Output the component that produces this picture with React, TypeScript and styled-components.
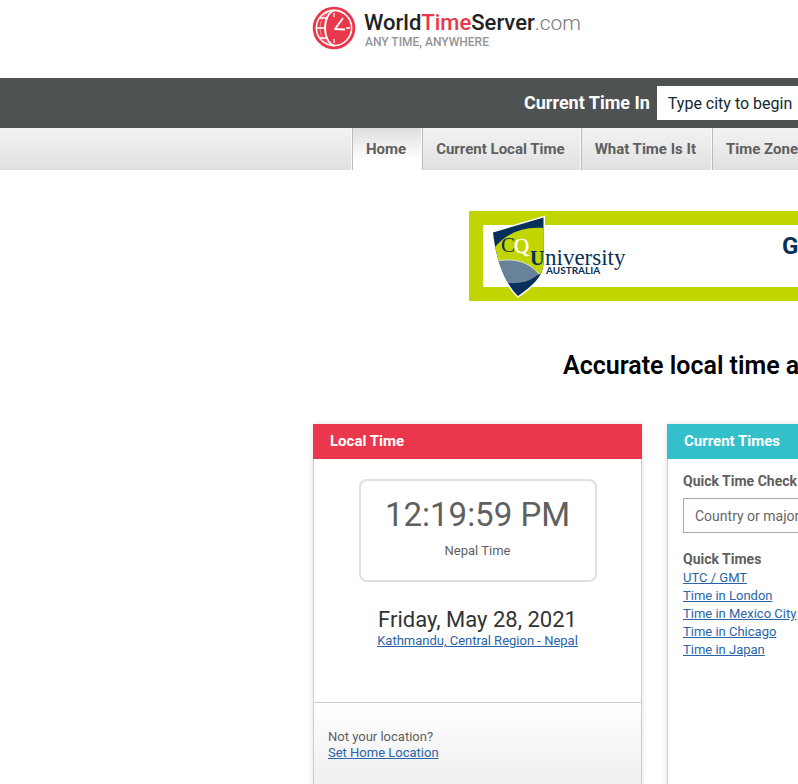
import React from "react";
import styled, { createGlobalStyle } from "styled-components";

const GlobalStyle = createGlobalStyle`
  * { box-sizing: border-box; }
  body {
    margin: 0;
    background: #fff;
    color: #5f5f5f;
    font-family: Roboto, "Liberation Sans", sans-serif;
    font-size: 13px;
    line-height: 18px;
  }
  h1, h2, h3, p, ul { margin: 0; padding: 0; }
  ul { list-style: none; }
`;

const Page = styled.div`
  min-height: 100vh;
  overflow: hidden;
  white-space: nowrap;
`;

const Header = styled.header`
  display: flex;
  align-items: flex-start;
  height: 78px;
  padding: 6px 0 0 312px;
`;

const BrandLink = styled.a`
  display: flex;
  gap: 8px;
  color: inherit;
  text-decoration: none;
`;

const BrandText = styled.div`
  padding-top: 4px;
`;

const BrandName = styled.div`
  color: #222;
  font-size: 22px;
  font-weight: 500;
  line-height: 26px;
`;

const BrandAccent = styled.span`
  color: #eb374b;
`;

const BrandSuffix = styled.span`
  color: #777;
  font-size: 21px;
  font-weight: 300;
`;

const Tagline = styled.div`
  padding-left: 1px;
  color: #949494;
  font-size: 12px;
  font-weight: 500;
  line-height: 13px;
`;

const SearchBar = styled.form`
  display: flex;
  align-items: center;
  gap: 7px;
  height: 50px;
  padding-left: 524px;
  background: #4e5253;
`;

const SearchLabel = styled.label`
  flex: none;
  color: #fff;
  font-size: 18px;
  font-weight: 700;
`;

const TextField = styled.input<{ $outlined?: boolean }>`
  flex: none;
  width: 288px;
  height: ${(p) => (p.$outlined ? 35 : 34)}px;
  padding: 0 11px;
  border: ${(p) => (p.$outlined ? "1px solid #aaa" : "0")};
  border-radius: 0;
  background: #fff;
  font-family: inherit;
  font-size: ${(p) => (p.$outlined ? 14 : 16)}px;
  &::placeholder {
    color: ${(p) => (p.$outlined ? "#666" : "#13292f")};
    opacity: 1;
  }
`;

const Nav = styled.nav`
  display: flex;
  height: 42px;
  padding-left: 352px;
  background: linear-gradient(#f2f2f2, #e1e1e1);
`;

const NavLink = styled.a<{ $active?: boolean }>`
  flex: none;
  padding: 0 16px 0 13px;
  border-left: 1px solid #bbb;
  box-shadow: -1px 0 0 #fafafa;
  background: ${(p) => (p.$active ? "linear-gradient(#dedede, #fff 75%)" : "none")};
  color: #5f5f5f;
  font-size: 15px;
  font-weight: 700;
  line-height: 42px;
  text-decoration: none;
`;

const Banner = styled.a`
  display: flex;
  justify-content: space-between;
  width: 728px;
  height: 90px;
  margin: 41px 0 0 469px;
  border: 14px solid #c1d500;
  background: #fff;
  color: #06305a;
  text-decoration: none;
`;

const BannerLogo = styled.svg`
  flex: none;
  margin: -14px 0 0 -5px;
  overflow: visible;
`;

const BannerTitle = styled.span`
  flex: none;
  width: 401px;
  font-family: "Liberation Sans Narrow", Roboto, sans-serif;
  font-size: 24px;
  font-weight: 700;
  line-height: 42px;
`;

const Headline = styled.h1`
  padding: 48px 0 0 563px;
  color: #000;
  font-size: 25px;
  font-weight: 600;
  line-height: 34px;
`;

const Cards = styled.main`
  display: grid;
  grid-template-columns: repeat(2, 329px);
  gap: 25px;
  padding: 41px 0 0 313px;
`;

const Card = styled.section`
  border: 1px solid #ccc;
  border-top: 0;
  box-shadow: 0 0 6px rgba(0, 0, 0, 0.12);
`;

const CardTitle = styled.h2<{ $color: string }>`
  margin: 0 -1px;
  padding: 0 17px;
  background: ${(p) => p.$color};
  color: #fff;
  font-size: 15px;
  font-weight: 700;
  line-height: 35px;
`;

const ClockArea = styled.div`
  display: flex;
  flex-direction: column;
  align-items: center;
  height: 243px;
  padding-top: 20px;
`;

const ClockBox = styled.div`
  width: 238px;
  height: 103px;
  padding-top: 14px;
  border: 2px solid #e0e0e0;
  border-radius: 8px;
  text-align: center;
`;

const ClockTime = styled.div`
  font-size: 33px;
  line-height: 40px;
`;

const ZoneName = styled.div`
  margin-top: 7px;
`;

const DateLine = styled.div`
  margin-top: 26px;
  color: #333;
  font-size: 22px;
  line-height: 24px;
`;

const TextLink = styled.a`
  color: #2a64a8;
  font-size: 13px;
  text-decoration: underline;
`;

const CardFooter = styled.div`
  display: flex;
  flex-direction: column;
  align-items: flex-start;
  min-height: 120px;
  padding: 26px 14px;
  border-top: 1px solid #ccc;
  background: linear-gradient(#fff, #e8e8e8);
  line-height: 16px;
`;

const QuickBody = styled.div`
  padding: 13px 15px;
`;

const FieldLabel = styled.label`
  display: block;
  margin-bottom: 8px;
  font-size: 14px;
  font-weight: 700;
`;

const QuickHeading = styled.h3`
  margin: 17px 0 1px;
  font-size: 14px;
  font-weight: 700;
  line-height: 18px;
`;

const QuickItem = styled.li`
  height: 18px;
`;

const navItems = ["Home", "Current Local Time", "What Time Is It", "Time Zone"];
const quickTimes = ["UTC / GMT", "Time in London", "Time in Mexico City", "Time in Chicago", "Time in Japan"];

function GlobeClock() {
  return (
    <svg width="44" height="44" viewBox="0 0 44 44" aria-hidden="true">
      <circle cx="22" cy="22" r="21.3" fill="#eb374b" />
      <g fill="none" stroke="#fff" strokeWidth="1.6">
        <circle cx="22" cy="22" r="17.6" />
        <path d="M22 4.4C10 9 10 35 22 39.6" strokeWidth="2" />
        <path d="M17 5.5C5 14 5 30 17 38.5" strokeWidth="1" opacity=".5" />
        <path d="M8 12h7M4.5 22h8M8 32h7" />
        <path d="M22 7v4M22 33v4M34 22h4" strokeWidth="1.3" />
        <path d="M31 12L23 23L33 23.5" strokeWidth="1.9" strokeLinejoin="round" />
      </g>
    </svg>
  );
}

function UniversityLogo() {
  return (
    <BannerLogo width="150" height="90" viewBox="0 0 150 90" role="img" aria-label="CQUniversity Australia">
      <defs>
        <clipPath id="shield">
          <path d="M15 21.5L65.5 6.5V53C65 66 53 76 40 85C28 74 18 50 15 21.5Z" />
        </clipPath>
      </defs>
      <path d="M15 21.5L65.5 6.5V53C65 66 53 76 40 85C28 74 18 50 15 21.5Z" stroke="#fff" strokeWidth="3" />
      <g clipPath="url(#shield)">
        <path d="M10 0h60v90H10z" fill="#06305a" />
        <path d="M17 36C29 22 46 15 66 17V62L58 64L20 52Z" fill="#c1d500" />
        <path d="M18 50C36 47 50 50 61 63C51 71 42 73 28 72Z" fill="#688299" />
        <path d="M18 50C36 47 50 50 61 63" fill="none" stroke="#dce4d0" strokeWidth="1" />
      </g>
      <g fontFamily="Liberation Serif, serif">
        <text x="23" y="41" fontSize="21" fill="#06305a">C</text>
        <text x="36" y="42" fontSize="21" fill="#fff" stroke="#fff" strokeWidth=".4">Q</text>
        <text x="52" y="54" fontSize="20" fontWeight="700" fill="#06305a">U</text>
        <text x="67" y="54" fontSize="23" fill="#06305a">niversity</text>
      </g>
      <text x="68" y="63" fontFamily="Lato, sans-serif" fontSize="10" fontWeight="700" fill="#06305a">AUSTRALIA</text>
    </BannerLogo>
  );
}

export default function App() {
  return (
    <Page>
      <GlobalStyle />
      <Header>
        <BrandLink href="#">
          <GlobeClock />
          <BrandText>
            <BrandName>
              World<BrandAccent>Time</BrandAccent>Server<BrandSuffix>.com</BrandSuffix>
            </BrandName>
            <Tagline>ANY TIME, ANYWHERE</Tagline>
          </BrandText>
        </BrandLink>
      </Header>
      <SearchBar>
        <SearchLabel htmlFor="city">Current Time In</SearchLabel>
        <TextField id="city" type="text" placeholder="Type city to begin" />
      </SearchBar>
      <Nav>
        {navItems.map((item, i) => (
          <NavLink key={item} href="#" $active={i === 0}>{item}</NavLink>
        ))}
      </Nav>
      <Banner href="#">
        <UniversityLogo />
        <BannerTitle>G</BannerTitle>
      </Banner>
      <Headline>Accurate local time a</Headline>
      <Cards>
        <Card>
          <CardTitle $color="#eb374b">Local Time</CardTitle>
          <ClockArea>
            <ClockBox>
              <ClockTime>12:19:59 PM</ClockTime>
              <ZoneName>Nepal Time</ZoneName>
            </ClockBox>
            <DateLine>Friday, May 28, 2021</DateLine>
            <TextLink href="#">Kathmandu, Central Region - Nepal</TextLink>
          </ClockArea>
          <CardFooter>
            <p>Not your location?</p>
            <TextLink href="#">Set Home Location</TextLink>
          </CardFooter>
        </Card>
        <Card>
          <CardTitle $color="#33c0ca">Current Times</CardTitle>
          <QuickBody>
            <FieldLabel htmlFor="place">Quick Time Check</FieldLabel>
            <TextField id="place" type="text" placeholder="Country or major city" $outlined />
            <QuickHeading>Quick Times</QuickHeading>
            <ul>
              {quickTimes.map((name) => (
                <QuickItem key={name}><TextLink href="#">{name}</TextLink></QuickItem>
              ))}
            </ul>
          </QuickBody>
        </Card>
      </Cards>
    </Page>
  );
}
